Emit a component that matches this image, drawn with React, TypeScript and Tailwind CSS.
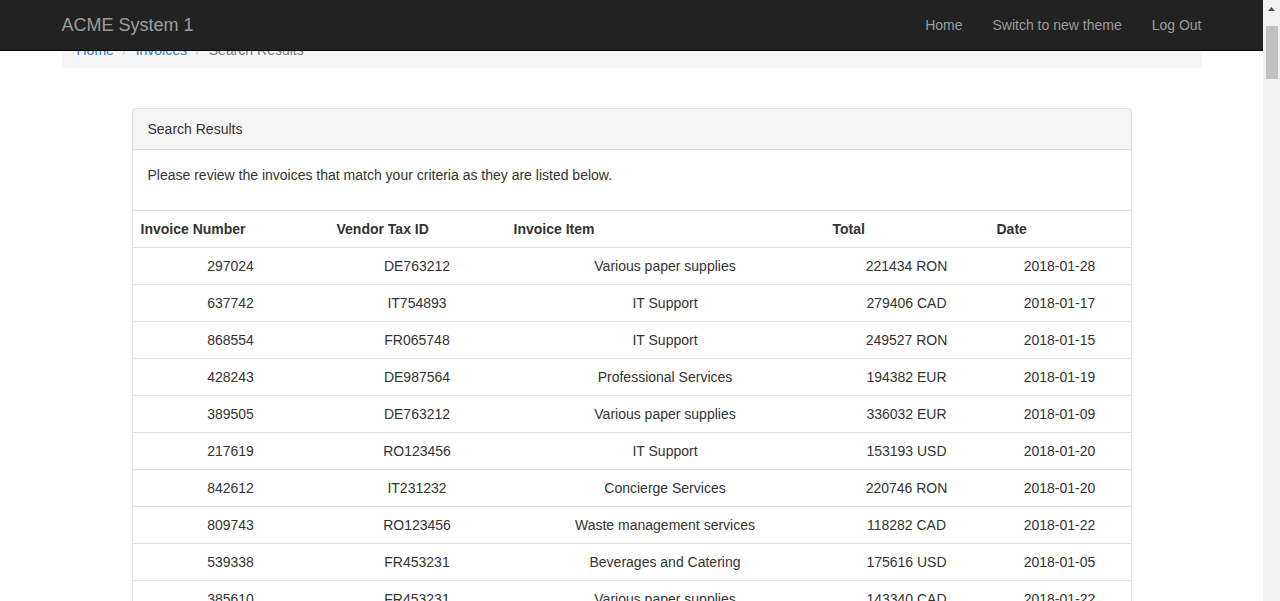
import React from "react";

const rows = [
  ["297024", "DE763212", "Various paper supplies", "221434 RON", "2018-01-28"],
  ["637742", "IT754893", "IT Support", "279406 CAD", "2018-01-17"],
  ["868554", "FR065748", "IT Support", "249527 RON", "2018-01-15"],
  ["428243", "DE987564", "Professional Services", "194382 EUR", "2018-01-19"],
  ["389505", "DE763212", "Various paper supplies", "336032 EUR", "2018-01-09"],
  ["217619", "RO123456", "IT Support", "153193 USD", "2018-01-20"],
  ["842612", "IT231232", "Concierge Services", "220746 RON", "2018-01-20"],
  ["809743", "RO123456", "Waste management services", "118282 CAD", "2018-01-22"],
  ["539338", "FR453231", "Beverages and Catering", "175616 USD", "2018-01-05"],
  ["385610", "FR453231", "Various paper supplies", "143340 CAD", "2018-01-22"],
];

const widths = ["w-[196px]", "w-[177px]", "w-[319px]", "w-[164px]", "w-[142px]"];

export default function App() {
  return (
    <div
      className="flex h-[601px] w-[1280px] overflow-hidden bg-white text-[14px] leading-[20px] text-[#333]"
      style={{ fontFamily: '"Liberation Sans", Arial, Helvetica, sans-serif' }}
    >
      <div className="relative flex-1">
        {/* fixed navbar */}
        <div className="absolute left-0 right-0 top-0 z-10 h-[51px] border-b border-[#080808] bg-[#222]">
          <div className="mx-auto flex h-[50px] w-[1170px] items-center justify-between px-[15px]">
            <span className="text-[18px] leading-[20px] text-[#9d9d9d]">ACME System 1</span>
            <div className="-mr-[15px] flex">
              <span className="px-[15px] py-[15px] text-[#9d9d9d]">Home</span>
              <span className="px-[15px] py-[15px] text-[#9d9d9d]">Switch to new theme</span>
              <span className="px-[15px] py-[15px] text-[#9d9d9d]">Log Out</span>
            </div>
          </div>
        </div>

        <div className="mx-auto w-[1170px] px-[15px] pt-[32px]">
          <div className="mb-[40px] flex h-[36px] items-center rounded-[4px] bg-[#f5f5f5] px-[15px]">
            <span className="text-[#337ab7]">Home</span>
            <span className="ml-[4px] px-[5px] text-[#ccc]">/{"\u00a0"}</span>
            <span className="text-[#337ab7]">Invoices</span>
            <span className="ml-[4px] px-[5px] text-[#ccc]">/{"\u00a0"}</span>
            <span className="text-[#777]">Search Results</span>
          </div>

          <div className="mx-auto w-[1000px] rounded-[4px] border border-[#ddd] bg-white">
            <div className="h-[41px] rounded-t-[3px] border-b border-[#ddd] bg-[#f5f5f5] px-[15px] py-[10px]">
              Search Results
            </div>
            <div className="p-[15px]">
              <p className="mb-[10px]">
                Please review the invoices that match your criteria as they are listed below.
              </p>
            </div>
            <table className="w-[998px] table-fixed border-collapse">
              <thead>
                <tr className="border-t border-[#ddd]">
                  {["Invoice Number", "Vendor Tax ID", "Invoice Item", "Total", "Date"].map((h, i) => (
                    <th
                      key={h}
                      className={`${widths[i]} border-b border-[#ddd] p-[8px] text-left font-bold leading-[20px]`}
                    >
                      {h}
                    </th>
                  ))}
                </tr>
              </thead>
              <tbody>
                {rows.map((r) => (
                  <tr key={r[0]} className="border-t border-[#ddd]">
                    {r.map((c, i) => (
                      <td key={i} className="p-[8px] text-center leading-[20px]">
                        {c}
                      </td>
                    ))}
                  </tr>
                ))}
              </tbody>
            </table>
          </div>
        </div>
      </div>

      {/* scrollbar */}
      <div className="flex w-[17px] flex-col items-center bg-[#f1f1f1]">
        <div className="flex h-[17px] w-full items-center justify-center">
          <svg width="7" height="4" viewBox="0 0 7 4">
            <path d="M0 4 L3.5 0 L7 4 Z" fill="#505050" />
          </svg>
        </div>
        <div className="mt-[9px] h-[53px] w-[12px] bg-[#c1c1c1]" />
      </div>
    </div>
  );
}
